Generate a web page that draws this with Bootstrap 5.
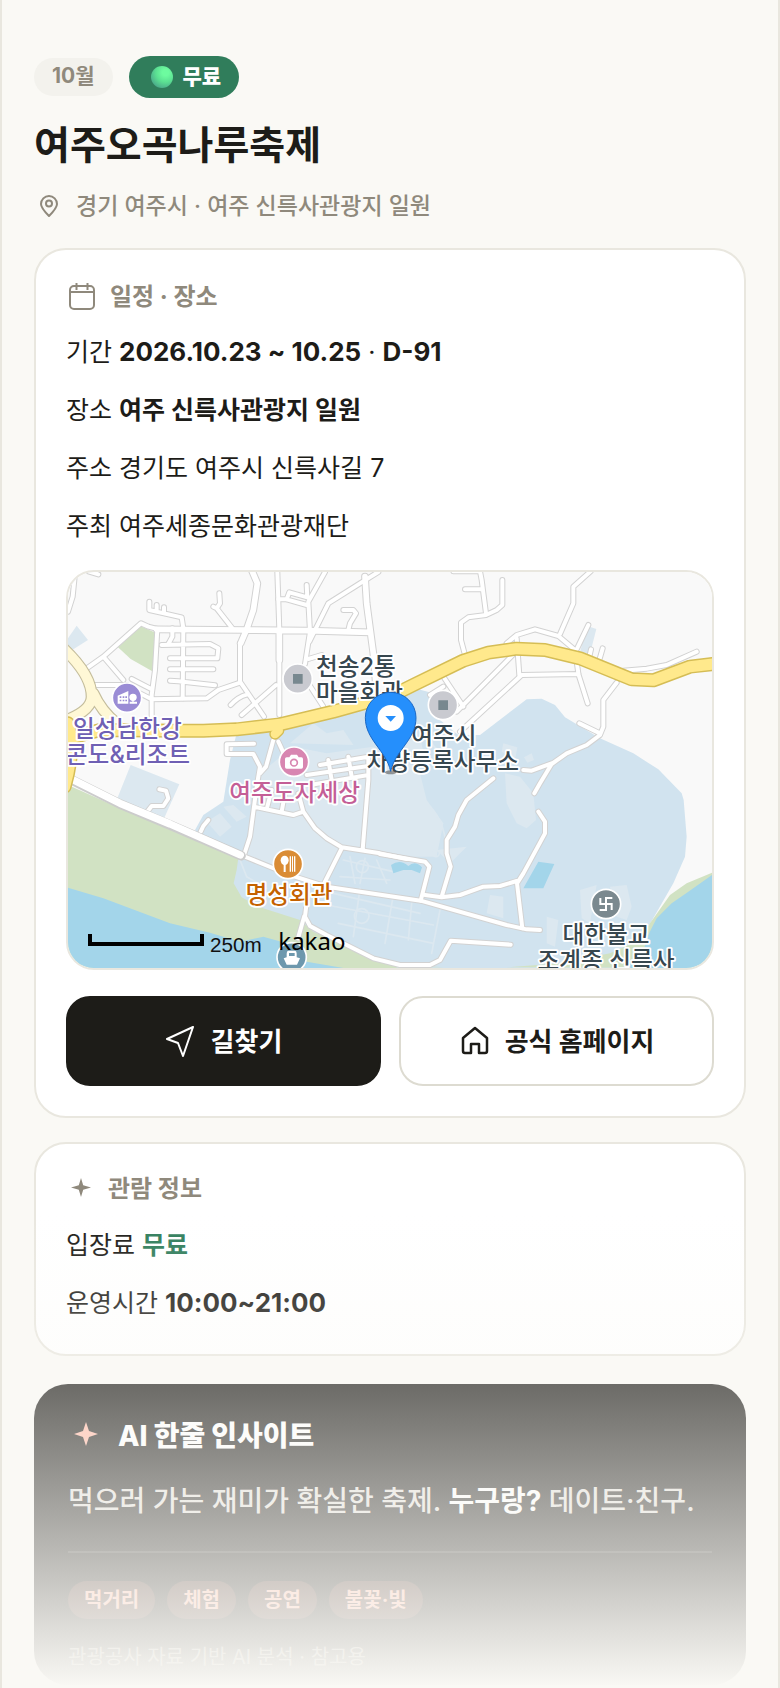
<!DOCTYPE html>
<html lang="ko">
<head>
    <meta charset="UTF-8">
    <meta name="viewport" content="width=device-width, initial-scale=1.0">
    <title>여주오곡나루축제</title>
    <link href="https://cdn.jsdelivr.net/npm/bootstrap@5.3.0/dist/css/bootstrap.min.css" rel="stylesheet">
    <style>
        body {
            font-family: Inter, "Noto Sans CJK KR", sans-serif;
            background: #faf9f5;
            color: #1d1c18;
        }
        .shell {
            padding: 56px 32px 2px;
            border: solid #e9e7df;
            border-width: 0 2px;
        }
        .muted { color: #8f897c; }
        .heavy { font-weight: 800; }

        .pill-month {
            height: 38px;
            padding: 0 18px 2px;
            background: #f3f2ed;
            font-size: 21px;
        }
        .pill-free {
            height: 42px;
            padding: 0 18px 0 22px;
            background: #307d5b;
            font-size: 21px;
            gap: 10px;
        }
        .ball {
            width: 22px;
            height: 22px;
            background: radial-gradient(circle at 66% 30%, #6dfb9f 15%, #5be092 45%, #4aa88a 80%, #4a9594 100%);
        }
        .festival-title {
            margin-top: 20px;
            font-size: 39px;
            line-height: 54px;
        }
        .festival-addr {
            margin-top: 18px;
            margin-bottom: 26px;
            font-size: 23px;
            line-height: 32px;
            gap: 14px;
        }

        .info-card {
            padding: 31px 30px 30px;
            border: 2px solid #e9e7df;
            border-radius: 32px;
        }
        .info-card.short { padding-bottom: 32px; }
        .info-head {
            margin-bottom: 20px;
            font-size: 24px;
            line-height: 32px;
            gap: 14px;
        }
        .info-head.compact {
            margin-bottom: 23px;
            line-height: 28px;
        }
        .info-list {
            font-size: 25px;
            line-height: 38px;
            gap: 20px;
        }
        .info-list .num { font-size: 26px; }
        .free-text { color: #307d5b; }

        .map-box {
            height: 400px;
            margin: 25px 0 26px;
            border: 2px solid #e9e7df;
            border-radius: 28px;
        }
        .map-box text {
            font-size: 71px;
            font-weight: 500;
            fill: #37474f;
            stroke: #fff;
            stroke-width: 11;
            stroke-linejoin: round;
            paint-order: stroke;
        }
        .line { fill: none; stroke-linejoin: round; stroke-linecap: round; }

        .action-btn {
            height: 90px;
            border: 2px solid #dddbd1;
            border-radius: 24px;
            color: #1d1c18;
            font-size: 26px;
            gap: 14px;
        }
        .action-btn.dark { background: #1d1c18; border-color: #1d1c18; color: #fff; }
        .action-gap { gap: 18px; }

        .ai-card {
            margin-top: 28px;
            padding: 34px 34px 12px;
            border-radius: 34px;
            background: #1d1c18;
        }
        .ai-head { font-size: 28px; line-height: 36px; gap: 16px; color: #fff; }
        .ai-text {
            margin: 25px 0 0;
            padding-bottom: 28px;
            border-bottom: 2px solid #3a3935;
            font-size: 28px;
            line-height: 44px;
            color: #e0ded8;
        }
        .ai-tags { margin-top: 28px; gap: 12px; }
        .ai-tag {
            height: 38px;
            padding: 0 16px;
            border-radius: 19px;
            background: #4b322b;
            color: #ffb7a3;
            font-size: 20px;
        }
        .ai-note { margin: 22px 0 0; font-size: 20px; line-height: 32px; color: #9a978e; }

        .fade-out {
            height: 28%;
            background: linear-gradient(rgba(250, 249, 245, 0), #faf9f5);
        }
    </style>
</head>
<body>
    <main class="shell position-relative min-vh-100">
        <header>
            <div class="d-flex align-items-center gap-3">
                <span class="pill-month muted rounded-pill d-flex align-items-center fw-bold">10월</span>
                <span class="pill-free rounded-pill d-flex align-items-center text-white heavy">
                    <i class="ball rounded-circle"></i>무료
                </span>
            </div>
            <h1 class="festival-title fw-bold mb-0">여주오곡나루축제</h1>
            <p class="festival-addr muted d-flex align-items-center fw-medium">
                <svg width="28" height="28" viewBox="0 0 28 28" fill="none" stroke="currentColor" stroke-width="2">
                    <path d="M15 24C9.500 18.500 7 15.500 7 12a8 8 0 0 1 16 0c0 3.500-2.500 6.500-8 12z" stroke-linejoin="round"/>
                    <circle cx="15" cy="11.500" r="3"/>
                </svg>
                경기 여주시 · 여주 신륵사관광지 일원
            </p>
        </header>

        <!-- 일정 · 장소 -->
        <section class="info-card bg-white">
            <h2 class="info-head muted d-flex align-items-center fw-bold">
                <svg width="30" height="30" viewBox="0 0 30 30" fill="none" stroke="currentColor" stroke-width="2">
                    <rect x="4" y="4" width="24" height="23" rx="4"/>
                    <path d="M4 10h24M10.500 1v7M21.500 1v7"/>
                </svg>
                일정 · 장소
            </h2>
            <div class="info-list d-flex flex-column">
                <div>기간 <strong class="num">2026.10.23 ~ 10.25</strong> · <strong class="num">D-91</strong></div>
                <div>장소 <strong>여주 신륵사관광지 일원</strong></div>
                <div>주소 경기도 여주시 신륵사길 7</div>
                <div>주최 여주세종문화관광재단</div>
            </div>

            <div class="map-box overflow-hidden">
                <svg class="d-block" width="100%" height="100%" viewBox="24 36 1932 1188" preserveAspectRatio="xMidYMid slice">
                    <defs>
                        <g id="lanes">
                            <path d="M80 325 130 290 243 190 265 200 292 207 285 330 275 405V500M130 290 190 360M105 375H200M215 357 275 388M240 400 275 418 440 415 475 390 540 368"/>
                            <path d="M268 125V150L365 172 370 205 368 415M290 155V135M312 160V142M337 205V230L325 252M305 255 450 252 475 265 472 295H330M330 328H460M330 362 355 364 465 376"/>
                            <path d="M478 100 480 130 470 145 517 205M470 145 460 140M540 250V365L612 470M648 375 545 465M560 404Q535 410 512 435M652 36 658 210V465"/>
                            <path d="M655 118H680L740 135M680 118 688 97 742 112 740 75M795 36 745 125 750 215 735 312M955 36 900 70 805 130 748 245M850 150H880L888 160 870 190 865 210M745 297 785 285M745 370 790 440"/>
                            <path d="M45 40 38 110 24 155M85 34 115 43"/>
                            <path d="M1180 34H1260L1265 60 1278 160M1215 88H1268M1327 60V135L1310 150 1278 165 1225 172 1203 188V240L1215 285M1592 34 1540 80V130L1500 222M1340 250 1370 225 1425 208 1495 228 1545 270 1555 340M1585 195 1550 268M1593 268 1588 290M1628 265 1618 300M1370 235 1378 345M1110 405 1150 380M1150 350 1210 440"/>
                            <path d="M1368 275 1190 455M1555 342 1385 345 1200 515M1555 342 1583 430M1910 275 1820 315 1760 326 1690 332M1670 368 1630 420V500L1620 525 1580 555 1520 580 1475 612 1440 670 1423 700M1558 490 1620 520M1390 630 1415 632 1475 610"/>
                            <path d="M1300 655 1220 720 1195 765 1185 800 1160 840V880L1172 920 1145 1010M1435 755 1455 785V820L1390 940 1371 970 1387 1105M960 882 1095 905 1108 920 1082 1022M1095 1005 1145 1012 1200 1005 1270 980 1320 978 1370 963"/>
                            <path d="M550 888 690 945 800 980 1082 1022 1340 1095 1400 1108 1440 1110M735 1070 750 1098 800 1125 940 1195 1020 1215H1110L1140 1200 1172 1142 1352 1154M790 975 845 865M735 1070 742 1010M733 1068 714 1135"/>
                            <path d="M1040 897 960 880 845 862 800 835 765 805 730 755 715 700M908 868 925 660V590M552 885 570 830 582 740M582 740 700 765 730 755M582 551 500 553V582H580L600 620 590 680 582 740M640 540 618 620 600 640M655 545 685 610M622 740 635 690M665 755 675 700M780 615 925 590M740 645 925 618M750 675 925 645M805 600 815 660M865 590 875 650"/>
                            <path d="M262 755 275 738H310L325 715 318 692 298 688M422 815 430 798 445 780"/>
                        </g>
                        <g id="avenues">
                            <path d="M575 30 592 70 580 150 560 208 542 250M560 210 740 212 930 217M658 215V300M915 50 920 130 940 280 950 400M290 208 560 210"/>
                        </g>
                    </defs>

                    <rect x="24" y="36" width="1932" height="1188" fill="#f9f9f9"/>
                    <!-- 공원 구역 -->
                    <path d="M530 520 660 505 820 470 1010 420 1075 388 1120 400 1140 480 1195 525 1260 525 1400 418 1445 416 1485 435 1515 472 1620 535 1720 580 1795 628 1865 700 1871 720 1880 830 1875 890 1840 970 1765 1100 1700 1224H700L540 1010 405 810 430 765 490 725 510 600z" fill="#d1e3ef"/>
                    <path d="M600 640 700 560 800 580 940 560 1000 600 1075 620 1100 720 1150 790 1130 890 1040 890 845 860 790 975 560 885 582 740z" fill="#dce8f0"/>
                    <path d="M690 550 760 490 800 520 850 510 880 555M900 480 1000 520M1335 640 1380 650 1420 700 1428 780 1400 805 1370 790 1340 730zM1325 575 1330 550 1372 562 1365 600zM1392 592 1415 580 1422 600 1402 608zM440 785 480 760 515 800 480 830zM490 740 520 735 560 770 530 785zM1290 1005 1330 1010V1075L1280 1060zM1560 990 1610 975 1590 1090 1565 1075zM1650 980 1700 975 1715 1040 1700 1080 1670 1070zM1460 1070 1495 1080 1485 1160 1460 1150zM1130 870 1220 860 1170 910zM1000 560 1080 530 1100 620z" fill="#dce8f0"/>
                    <g class="line" stroke="#dce8f0" stroke-width="5">
                        <path d="M820 1000 1080 1060M800 1035 1120 1095M835 1090 1120 1150M900 985 880 1130M1000 1005 975 1150M1055 1030 1045 1140M1140 1050 1115 1180M850 900 1000 935M840 950 990 960M870 890 885 970M915 895 900 970M950 900 980 970M580 800 640 850 660 900M600 830 550 870M1110 740Q1150 780 1160 860M1090 500Q1110 560 1150 580M540 900 560 950 620 985"/>
                        <circle cx="907" cy="920" r="18"/><circle cx="905" cy="1068" r="22"/><circle cx="1128" cy="880" r="10"/>
                    </g>
                    <path d="M24 235 50 197 84 240 40 268 24 262zM212 615 358 673 310 780 172 715zM1582 198 1609 207 1590 282 1560 275z" fill="#dce8f0"/>
                    <path d="M240 198 287 218 277 334 212 297 174 262z" fill="#d1e2c3"/>
                    <path d="M24 675 180 745 535 893 530 930 521 970 545 1012 600 1042 720 1080 760 1115 1010 1218V1224H24z" fill="#d1e2c3"/>
                    <path d="M24 983 130 1015 230 1052 330 1090 450 1118 540 1145 610 1130 680 1150 740 1205 850 1224H24z" fill="#a3d5ea"/>
                    <path d="M960 1210 1150 1222H960zM1340 1222 1500 1210 1650 1180 1740 1140 1770 1090 1830 1005 1880 970 1956 938V1224z" fill="#d1e2c3"/>
                    <path d="M1956 945 1885 995 1835 1030 1790 1075 1762 1130 1750 1175 1690 1224H1956z" fill="#a3d5ea"/>
                    <path d="M1435 905 1483 912 1450 985H1390zM993 915Q1020 895 1045 918 1065 900 1086 922L1080 940 1055 930 1030 930 1000 940z" fill="#a3d5ea"/>

                    <!-- 도로 -->
                    <use href="#lanes" class="line" stroke="#d2d2d2" stroke-width="18"/>
                    <use href="#avenues" class="line" stroke="#d2d2d2" stroke-width="23"/>
                    <use href="#lanes" class="line" stroke="#fff" stroke-width="12"/>
                    <use href="#avenues" class="line" stroke="#fff" stroke-width="17"/>
                    <path class="line" d="M30 657 180 732 330 795 543 887" stroke="#ccc" stroke-width="29"/>
                    <path class="line" d="M30 655 180 730 330 792 541 885" stroke="#fff" stroke-width="22"/>
                    <g class="line">
                        <path d="M10 265Q95 345 95 410 95 450 20 480M100 400Q125 455 170 490" stroke="#c4bd9c" stroke-width="36"/>
                        <path d="M10 265Q95 345 95 410 95 450 20 480M100 400Q125 455 170 490" stroke="#fff8d6" stroke-width="29"/>
                        <path d="M645 522 656 512" stroke="#d5bd55" stroke-width="34"/>
                        <path d="M24 490Q48 560 14 680M10 540 120 510 360 512H430L530 508 660 493 820 455 1000 405 1060 375 1210 302 1285 278 1370 266 1455 270 1560 295 1715 358 1780 361 1890 320 1960 312" stroke="#d5bd55" stroke-width="42"/>
                        <path d="M645 522 656 512" stroke="#ffe98c" stroke-width="26"/>
                        <path d="M24 490Q48 560 14 680M10 540 120 510 360 512H430L530 508 660 493 820 455 1000 405 1060 375 1210 302 1285 278 1370 266 1455 270 1560 295 1715 358 1780 361 1890 320 1960 312" stroke="#ffe98c" stroke-width="33"/>
                    </g>

                    <!-- 장소 아이콘 -->
                    <g stroke="#fff" stroke-width="5">
                        <circle cx="201" cy="413" r="44" fill="#9a8cd5"/>
                        <circle cx="713" cy="356" r="44" fill="#c9cad0"/>
                        <circle cx="1149" cy="435" r="44" fill="#c9cad0"/>
                        <circle cx="702" cy="605" r="44" fill="#d886b1"/>
                        <circle cx="684" cy="912" r="44" fill="#da8c35"/>
                        <circle cx="1638" cy="1032" r="44" fill="#7b898f"/>
                        <circle cx="695" cy="1192" r="44" fill="#6d98ad"/>
                    </g>
                    <path d="M699 342h29v29h-29zM1135 421h29v29h-29z" fill="#78888f"/>
                    <g fill="#fff">
                        <path d="M173 407 205 393V431H173zM209 425H231V431H209z"/>
                        <circle cx="219" cy="412" r="11"/><path d="M217 412h4v18h-4z"/>
                        <path d="M179 409h5v5h-5zM188 409h5v5h-5zM179 419h5v5h-5zM188 419h5v5h-5zM196 409h5v5h-5zM196 419h5v5h-5z" fill="#9a8cd5"/>
                        <path d="M680 592H688L693 584H711L716 592H724Q729 592 729 597V621Q729 626 724 626H680Q675 626 675 621V597Q675 592 680 592z"/>
                        <circle cx="702" cy="608" r="10" fill="none" stroke="#d886b1" stroke-width="5"/>
                        <ellipse cx="674" cy="901" rx="12" ry="14"/><path d="M671 912h6v24h-6zM689 889h4v46h-4zM696 889h3v46h-3zM702 889h4v46h-4z"/>
                        <path d="M680 1192V1182Q680 1172 686 1172H704Q710 1172 710 1182V1192L720 1195 711 1214H680L671 1195z"/>
                        <path d="M687 1179h17v9h-17z" fill="#6d98ad"/>
                    </g>
                    <path d="M1621 1014V1032H1655V1050M1657 1014H1638V1050H1619" fill="none" stroke="#fff" stroke-width="6"/>

                    <text x="768" y="345">천송2통</text>
                    <text x="768" y="424">마을회관</text>
                    <text x="1054" y="552">여주시</text>
                    <text x="920" y="630">차량등록사무소</text>
                    <text x="202" y="532" text-anchor="middle" style="fill: #6f60b4">일성남한강</text>
                    <text x="204" y="610" text-anchor="middle" style="fill: #6f60b4">콘도&amp;리조트</text>
                    <text x="704" y="724" text-anchor="middle" style="fill: #c45e96">여주도자세상</text>
                    <text x="687" y="1030" text-anchor="middle" style="fill: #c46200">명성회관</text>
                    <text x="1638" y="1149" text-anchor="middle">대한불교</text>
                    <text x="1638" y="1227" text-anchor="middle">조계종 신륵사</text>

                    <path d="M90 1122V1152H426V1122" fill="none" stroke="#000" stroke-width="12"/>
                    <text x="450" y="1176" style="font: 62px 'Liberation Sans', sans-serif; fill: #111; stroke: none">250m</text>
                    <text x="655" y="1170" style="font: 72px 'Noto Sans', sans-serif; fill: #000; stroke: none">kakao</text>

                    <ellipse cx="992" cy="637" rx="18" ry="6" fill="#555" opacity=".6"/>
                    <path d="M992 634C978 570 916 540 916 473a76 76 0 0 1 152 0C1068 540 1006 570 992 634z" fill="#258ffc" stroke="#1c68c4" stroke-width="3"/>
                    <circle cx="992" cy="474" r="39" fill="#fff"/>
                    <path d="M976 468H1008L992 485z" fill="#258ffc"/>
                </svg>
            </div>

            <div class="d-flex action-gap">
                <button type="button" class="btn action-btn dark d-flex flex-fill w-50 align-items-center justify-content-center fw-bold">
                    <svg width="32" height="32" viewBox="0 0 32 32" fill="none" stroke="currentColor" stroke-width="2" stroke-linejoin="round">
                        <path d="M28 2 2 14l11 4 5 13z"/>
                    </svg>
                    길찾기
                </button>
                <button type="button" class="btn action-btn bg-white d-flex flex-fill w-50 align-items-center justify-content-center fw-bold">
                    <svg width="32" height="32" viewBox="0 0 32 32" fill="none" stroke="currentColor" stroke-width="2.500" stroke-linejoin="round">
                        <path d="M4 13 16 3l12 10v13q0 2-2 2h-6v-9h-8v9H6q-2 0-2-2z"/>
                    </svg>
                    공식 홈페이지
                </button>
            </div>
        </section>

        <!-- 관람 정보 -->
        <section class="info-card short bg-white mt-4">
            <h2 class="info-head compact muted d-flex align-items-center fw-bold">
                <svg width="28" height="28" viewBox="0 0 28 28" fill="currentColor">
                    <path d="M15 3l2.200 7.300L25 12.500l-7.800 2.200L15 22l-2.200-7.300L5 12.500l7.800-2.200z"/>
                </svg>
                관람 정보
            </h2>
            <div class="info-list d-flex flex-column">
                <div>입장료 <strong class="free-text">무료</strong></div>
                <div>운영시간 <strong class="num">10:00~21:00</strong></div>
            </div>
        </section>

        <!-- AI 인사이트 -->
        <section class="ai-card">
            <h2 class="ai-head d-flex align-items-center heavy mb-0">
                <svg width="34" height="34" viewBox="0 0 34 34" fill="#ffb7a3">
                    <path d="M18 3l3 9 9 3-9 3-3 9-3-9-9-3 9-3z"/>
                </svg>
                AI 한줄 인사이트
            </h2>
            <p class="ai-text fw-medium">먹으러 가는 재미가 확실한 축제. <strong class="text-white">누구랑?</strong> 데이트·친구.</p>
            <div class="ai-tags d-flex flex-wrap">
                <span class="ai-tag d-flex align-items-center fw-bold">먹거리</span>
                <span class="ai-tag d-flex align-items-center fw-bold">체험</span>
                <span class="ai-tag d-flex align-items-center fw-bold">공연</span>
                <span class="ai-tag d-flex align-items-center fw-bold">불꽃·빛</span>
            </div>
            <p class="ai-note">관광공사 자료 기반 AI 분석 · 참고용</p>
        </section>

        <div class="fade-out position-absolute bottom-0 start-0 end-0 pe-none"></div>
    </main>

    <script src="https://cdn.jsdelivr.net/npm/bootstrap@5.3.0/dist/js/bootstrap.bundle.min.js"></script>
</body>
</html>
